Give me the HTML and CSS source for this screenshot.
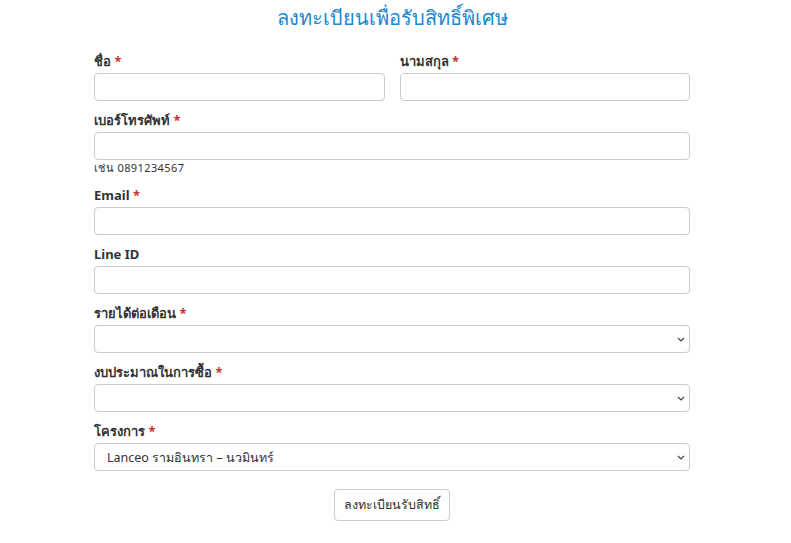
FILE: index.html
```html
<!DOCTYPE html>
<html lang="th">
<head>
    <meta charset="UTF-8">
    <meta name="viewport" content="width=device-width, initial-scale=1.0">
    <title>ลงทะเบียนเพื่อรับสิทธิ์พิเศษ</title>
    <link rel="stylesheet" href="styles.css">
</head>
<body>
    <div class="container">
        <h2 class="title">ลงทะเบียนเพื่อรับสิทธิ์พิเศษ</h2>
        <form class="register-form">
            <div class="row">
                <div class="form-group">
                    <label>ชื่อ <span class="req">*</span></label>
                    <input type="text" class="form-control">
                </div>
                <div class="form-group">
                    <label>นามสกุล <span class="req">*</span></label>
                    <input type="text" class="form-control">
                </div>
            </div>
            <div class="form-group">
                <label>เบอร์โทรศัพท์ <span class="req">*</span></label>
                <input type="text" class="form-control">
                <small class="help">เช่น 0891234567</small>
            </div>
            <div class="form-group">
                <label>Email <span class="req">*</span></label>
                <input type="text" class="form-control">
            </div>
            <div class="form-group">
                <label>Line ID</label>
                <input type="text" class="form-control">
            </div>
            <div class="form-group">
                <label>รายได้ต่อเดือน <span class="req">*</span></label>
                <div class="select-wrap">
                    <select class="form-control"><option></option></select>
                    <svg class="caret" width="8" height="5" viewBox="0 0 8 5"><path d="M1 1l3 3 3-3" fill="none" stroke="#444" stroke-width="1.2"/></svg>
                </div>
            </div>
            <div class="form-group">
                <label>งบประมาณในการซื้อ <span class="req">*</span></label>
                <div class="select-wrap">
                    <select class="form-control"><option></option></select>
                    <svg class="caret" width="8" height="5" viewBox="0 0 8 5"><path d="M1 1l3 3 3-3" fill="none" stroke="#444" stroke-width="1.2"/></svg>
                </div>
            </div>
            <div class="form-group">
                <label>โครงการ <span class="req">*</span></label>
                <div class="select-wrap">
                    <select class="form-control"><option>Lanceo รามอินทรา – นวมินทร์</option></select>
                    <svg class="caret" width="8" height="5" viewBox="0 0 8 5"><path d="M1 1l3 3 3-3" fill="none" stroke="#444" stroke-width="1.2"/></svg>
                </div>
            </div>
            <div class="actions">
                <button type="button" class="btn">ลงทะเบียนรับสิทธิ์</button>
            </div>
        </form>
    </div>
</body>
</html>
```

FILE: styles.css
```css
* {
    margin: 0;
    padding: 0;
    box-sizing: border-box;
}

body {
    font-family: Tahoma, 'Noto Sans', 'DejaVu Sans', sans-serif;
    font-size: 13px;
    color: #333;
    background: #fff;
}

.container {
    width: 596px;
    margin-left: 94px;
    padding-top: 4px;
}

.title {
    color: #1a87d0;
    font-size: 20px;
    font-weight: 500;
    text-align: center;
    line-height: 28px;
    margin-bottom: 18px;
}

.row {
    display: flex;
    gap: 15px;
}

.row .form-group {
    flex: 1;
}

.form-group {
    margin-bottom: 8px;
}

.form-group label {
    display: block;
    font-weight: bold;
    line-height: 18px;
    padding-top: 2px;
    margin-bottom: 3px;
}

.req {
    color: #c9302c;
}

.form-control {
    display: block;
    width: 100%;
    height: 28px;
    border: 1px solid #ccc;
    border-radius: 4px;
    background: #fff;
    font-family: inherit;
    font-size: 12.5px;
    color: #333;
    padding: 0 12px;
    appearance: none;
    -webkit-appearance: none;
}

.help {
    display: block;
    font-size: 11px;
    letter-spacing: 0.4px;
    line-height: 16px;
}

.select-wrap {
    position: relative;
}

.caret {
    position: absolute;
    right: 5px;
    top: 12px;
}

.actions {
    text-align: center;
    padding-top: 10px;
}

.btn {
    background: #fff;
    border: 1px solid #ccc;
    border-radius: 4px;
    height: 32px;
    padding: 0 9px;
    font-family: inherit;
    font-size: 12.5px;
    color: #333;
}
```
